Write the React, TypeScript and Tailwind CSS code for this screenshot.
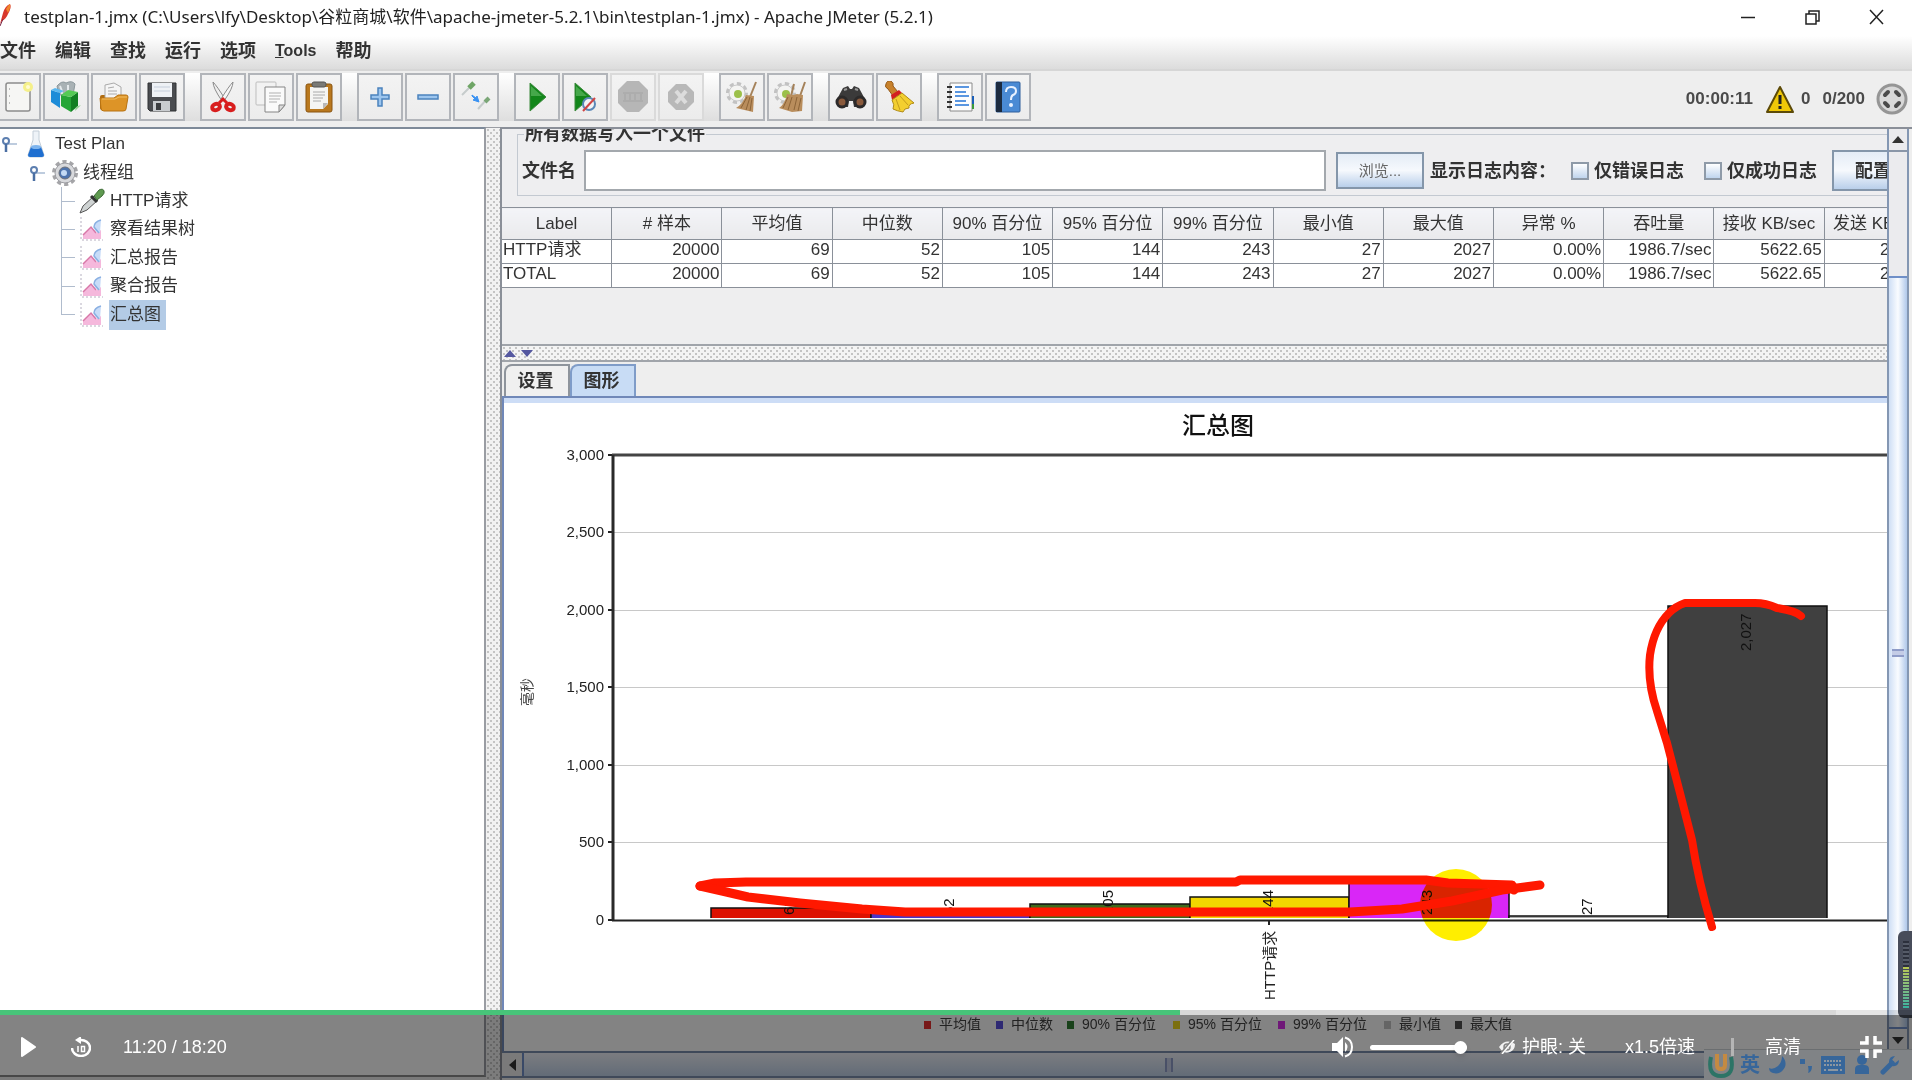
import React, { useState } from 'react';

interface ResultRow {
  label: string;
  values: string[];
}

interface ChartBar {
  label: string;
  x: number;
  top: number;
  width: number;
  color: string;
  textY: number;
}

const menus = ['文件', '编辑', '查找', '运行', '选项', 'Tools', '帮助'];

const columns = [
  'Label',
  '# 样本',
  '平均值',
  '中位数',
  '90% 百分位',
  '95% 百分位',
  '99% 百分位',
  '最小值',
  '最大值',
  '异常 %',
  '吞吐量',
  '接收 KB/sec',
  '发送 KB/sec',
];

const values = ['20000', '69', '52', '105', '144', '243', '27', '2027', '0.00%', '1986.7/sec', '5622.65', '240.57'];

const rows: ResultRow[] = [
  { label: 'HTTP请求', values },
  { label: 'TOTAL', values },
];

const ticks = [
  { label: '3,000', y: 455 },
  { label: '2,500', y: 532 },
  { label: '2,000', y: 610 },
  { label: '1,500', y: 687 },
  { label: '1,000', y: 765 },
  { label: '500', y: 842 },
  { label: '0', y: 920 },
];

const bars: ChartBar[] = [
  { label: '69', x: 711, top: 908, width: 160, color: '#dd1100', textY: 915 },
  { label: '52', x: 871, top: 911, width: 159, color: '#4a35c8', textY: 915 },
  { label: '105', x: 1030, top: 904, width: 160, color: '#3f6b1c', textY: 915 },
  { label: '144', x: 1190, top: 897, width: 159, color: '#f2d600', textY: 915 },
  { label: '243', x: 1349, top: 883, width: 160, color: '#d926f7', textY: 915 },
  { label: '27', x: 1509, top: 916, width: 159, color: '#a8a8a8', textY: 915 },
  { label: '2,027', x: 1668, top: 606, width: 159, color: '#404040', textY: 651 },
];

const legend = [
  { label: '平均值', x: 924, color: '#e83030' },
  { label: '中位数', x: 996, color: '#5a50e0' },
  { label: '90% 百分位', x: 1067, color: '#2f7f34' },
  { label: '95% 百分位', x: 1173, color: '#f0d820' },
  { label: '99% 百分位', x: 1278, color: '#d830ea' },
  { label: '最小值', x: 1384, color: '#c4c4c4' },
  { label: '最大值', x: 1455, color: '#505050' },
];

function Icon({ children }: { children: React.ReactNode }) {
  return (
    <svg viewBox="0 0 32 32" className="size-8" aria-hidden="true">
      {children}
    </svg>
  );
}

function Gear() {
  return (
    <g>
      <circle cx="11" cy="12" r="9" fill="none" stroke="#c2c2c2" strokeWidth="4" strokeDasharray="4 3" />
      <circle cx="11" cy="12" r="8" fill="#f4f4f2" stroke="#c9c9c9" />
      <circle cx="12" cy="13" r="4" fill="#9cc04a" />
    </g>
  );
}

const toolGroups = [
  [
    {
      name: '新建',
      icon: (
        <Icon>
          <rect x="4" y="2" width="24" height="28" rx="2" fill="#f6f6f4" stroke="#8c8c8c" strokeWidth="1.5" />
          <path d="M7 8h1M7 15h1M7 22h1" stroke="#bbb" strokeWidth="2" />
          <circle cx="26" cy="6" r="5" fill="#f5f08a" />
          <circle cx="26" cy="6" r="2" fill="#fffbd0" />
        </Icon>
      ),
    },
    {
      name: '模板',
      icon: (
        <Icon>
          <path d="M7 5q5-6 9-3 6-3 9 1l-2 11H9z" fill="#a9b2b5" stroke="#8c989c" />
          <path d="M10 5q2 4 2 8M18 4v8" stroke="#e5eaec" strokeWidth="2" />
          <path d="M1 9l9 3v15l-9-6z" fill="#1d8cd8" />
          <path d="M1 9l4-2 9 3-4 2z" fill="#5db8ef" />
          <path d="M11 14l10 2v15l-10-6z" fill="#25a536" />
          <path d="M21 16l7-5v14l-7 6z" fill="#127f22" />
          <path d="M11 14l7-5 10 2-7 5z" fill="#55ca55" />
          <path d="M26 26l5-2-6 6" fill="#92cf91" />
        </Icon>
      ),
    },
    {
      name: '打开',
      icon: (
        <Icon>
          <path d="M2 16q0-2 2-2h8v15H4q-2 0-2-2z" fill="#b06c10" />
          <path d="M7 4l9-2 7 4v12H7z" fill="#f5f5f5" stroke="#aaa" />
          <path d="M10 7l6-1M10 10h9M10 13h9" stroke="#aaa" />
          <path d="M2 17h14l4-3h8q2 0 2 2l-2 12q0 2-3 2H6q-3 0-3-3z" fill="#dd9427" stroke="#b87312" />
          <path d="M4 18h13l4-2h8" fill="none" stroke="#f2bd63" />
        </Icon>
      ),
    },
    {
      name: '保存',
      icon: (
        <Icon>
          <path d="M2 2h28v28H4l-2-2z" fill="#4a4c50" stroke="#2e3033" />
          <rect x="6" y="2" width="20" height="14" fill="#eef1f5" />
          <path d="M8 6h16M8 10h16" stroke="#c5cedb" />
          <rect x="7" y="20" width="17" height="10" fill="#c9cccf" />
          <rect x="10" y="22" width="5" height="7" fill="#3b3d40" />
        </Icon>
      ),
    },
  ],
  [
    {
      name: '剪切',
      icon: (
        <Icon>
          <path d="M6 1q0 6 9 19l3-2Q10 5 6 1z" fill="#eee" stroke="#8a8a8a" />
          <path d="M26 1q0 6-9 19l-3-2Q22 5 26 1z" fill="#f7f7f7" stroke="#8a8a8a" />
          <ellipse cx="9" cy="26" rx="4" ry="3" fill="none" stroke="#d81e1e" strokeWidth="4" transform="rotate(-25 9 26)" />
          <ellipse cx="23" cy="26" rx="4" ry="3" fill="none" stroke="#d81e1e" strokeWidth="4" transform="rotate(25 23 26)" />
          <path d="M12 22l4-4 4 4" fill="none" stroke="#d81e1e" strokeWidth="3" />
        </Icon>
      ),
    },
    {
      name: '复制',
      icon: (
        <Icon>
          <rect x="1" y="1" width="20" height="23" rx="1" fill="#f2f2f2" stroke="#bdbdbd" />
          <path d="M10 6h20v18l-6 7H10z" fill="#fafafa" stroke="#858585" />
          <path d="M14 12h12M14 15h12M14 18h11M14 21h8" stroke="#b0b0b0" />
          <path d="M30 24h-6v7z" fill="#ddd" stroke="#858585" />
        </Icon>
      ),
    },
    {
      name: '粘贴',
      icon: (
        <Icon>
          <rect x="3" y="3" width="26" height="28" rx="2" fill="#b9781e" stroke="#8a5510" />
          <path d="M7 6h18v17l-5 5H7z" fill="#f5f5f3" />
          <path d="M25 22h-5v6z" fill="#b8b8b8" />
          <rect x="9" y="1" width="14" height="5" rx="2" fill="#7a7a76" stroke="#555" />
          <path d="M10 11h12M10 14h12M10 17h10M10 20h8" stroke="#aaa" />
        </Icon>
      ),
    },
  ],
  [
    {
      name: '展开',
      icon: (
        <Icon>
          <path d="M14 7h4v7h7v4h-7v7h-4v-7H7v-4h7z" fill="#9cc5ee" stroke="#4b83bd" strokeWidth="1.5" />
        </Icon>
      ),
    },
    {
      name: '折叠',
      icon: (
        <Icon>
          <rect x="6" y="14" width="20" height="4" fill="#9cc5ee" stroke="#4b83bd" strokeWidth="1.5" />
        </Icon>
      ),
    },
    {
      name: '切换',
      icon: (
        <Icon>
          <path d="M2 14L11 5" stroke="#c6cccc" strokeWidth="2" />
          <path d="M9 7l5-5" stroke="#6fa566" strokeWidth="5" />
          <path d="M18 28l9-10" stroke="#c6cccc" strokeWidth="2" />
          <path d="M25 21l4-4" stroke="#7aa676" strokeWidth="4" />
          <path d="M12 14l4 3 1-2 2 6-6-2 2-1-3-3z" fill="#3a92f2" stroke="#3a92f2" />
        </Icon>
      ),
    },
  ],
  [
    {
      name: '启动',
      icon: (
        <Icon>
          <path d="M9 2l16 14L9 30z" fill="#12861a" stroke="#3c8a3c" />
          <path d="M10 5l11 10H10z" fill="#45a84a" />
        </Icon>
      ),
    },
    {
      name: '不停顿开始',
      icon: (
        <Icon>
          <path d="M6 2l16 14L6 30z" fill="#12861a" stroke="#3c8a3c" />
          <path d="M7 5l11 10H7z" fill="#45a84a" />
          <circle cx="20" cy="23" r="6" fill="#f2f4f6" stroke="#5a88b8" strokeWidth="2" />
          <path d="M14 30l12-13" stroke="#d04545" strokeWidth="2" />
        </Icon>
      ),
    },
    {
      name: '停止',
      disabled: true,
      icon: (
        <Icon>
          <path d="M10 0h12l9 9v13l-9 9H10l-9-9V9z" fill="#b6b6b6" />
          <path d="M6 12h20M6 20h20" stroke="#adadad" strokeWidth="2" />
          <path d="M8 12v8M13 12v8M18 12v8M24 12v8" stroke="#adadad" strokeWidth="2" />
        </Icon>
      ),
    },
    {
      name: '关闭',
      disabled: true,
      icon: (
        <Icon>
          <path d="M11 3h10l8 8v10l-8 8H11l-8-8V11z" fill="#b8b8b8" />
          <path d="M11 10l10 12M21 10L11 22" stroke="#dcdcdc" strokeWidth="4" />
        </Icon>
      ),
    },
  ],
  [
    {
      name: '清除',
      icon: (
        <Icon>
          <Gear />
          <path d="M30 1l-6 15" stroke="#a5825a" strokeWidth="2" />
          <path d="M20 14l8 1-1 16-17-4q7-4 10-13z" fill="#b98d5c" />
          <path d="M21 16l-6 11M24 16l-4 13M26 17l-2 13" stroke="#8c6438" />
        </Icon>
      ),
    },
    {
      name: '清除全部',
      icon: (
        <Icon>
          <Gear />
          <path d="M20 3l-3 12M31 1l-5 14" stroke="#a5825a" strokeWidth="2" />
          <path d="M13 13l6 1 4-1 6 1-1 16-10 1-13-4q6-4 8-14z" fill="#b98d5c" />
          <path d="M14 16L9 27M18 16l-4 13M23 16l-3 13M27 17l-3 13" stroke="#8c6438" />
        </Icon>
      ),
    },
  ],
  [
    {
      name: '查找',
      icon: (
        <Icon>
          <path d="M8 7l5-2 2 3h2l2-3 5 2 7 13-4 6h-8l-1-6h-4l-1 6H5l-4-6z" fill="#3b3a3a" />
          <circle cx="7" cy="21" r="5" fill="#8a5a3c" stroke="#2c2a2a" strokeWidth="3" />
          <circle cx="25" cy="21" r="5" fill="#8a5a3c" stroke="#2c2a2a" strokeWidth="3" />
          <path d="M9 9l3-1M20 8l3 1" stroke="#999" strokeWidth="2" />
        </Icon>
      ),
    },
    {
      name: '清除查找',
      icon: (
        <Icon>
          <path d="M3 3q1-4 5-3 3 2 2 5l5 6-5 4-5-7Q1 6 3 3z" fill="#c8822c" stroke="#94591a" />
          <path d="M8 14l8-5 3 3-10 7z" fill="#d32020" />
          <path d="M9 19l10-7 12 10q-6 1-5 5-5 0-6 4-6-1-10-3 2-4-1-9z" fill="#f3cf2f" stroke="#b08a14" />
          <path d="M13 18l4 11M17 15l8 9" stroke="#c49d1c" />
        </Icon>
      ),
    },
  ],
  [
    {
      name: '函数助手',
      icon: (
        <Icon>
          <path d="M6 2h22v28H6z" fill="#fdfdfd" stroke="#8a8a8a" />
          <path d="M28 15h2v8h-2z" fill="#1b5fb8" />
          <path d="M28 23h2v5h-2z" fill="#3a9a3a" />
          <path d="M11 6h14M11 11h11M11 15h14M11 20h11M11 24h14" stroke="#5a96e0" strokeWidth="2" />
          <path d="M3 6h5M3 11h5M3 16h5M3 21h5M3 26h5" stroke="#333" strokeWidth="2" />
        </Icon>
      ),
    },
    {
      name: '帮助',
      icon: (
        <Icon>
          <rect x="4" y="1" width="24" height="30" rx="1" fill="#4a8ad4" stroke="#2f5f9c" />
          <rect x="4" y="1" width="6" height="30" fill="#1c2b40" />
          <path d="M14 11q0-5 5-5t5 4q0 3-3 4-2 1-2 5" fill="none" stroke="#e8f1ff" strokeWidth="2" />
          <circle cx="19" cy="24" r="2" fill="#e8f1ff" />
        </Icon>
      ),
    },
  ],
];

function Knob() {
  return (
    <svg viewBox="0 0 18 20" className="h-5 w-[18px] shrink-0" aria-hidden="true">
      <path d="M8 10h9" stroke="#a9bbd3" strokeWidth="1.5" />
      <circle cx="6" cy="7" r="3" fill="#fff" stroke="#5d7fb0" strokeWidth="2" />
      <path d="M6 10v8" stroke="#4b6fa3" strokeWidth="2.5" />
    </svg>
  );
}

function GraphIcon() {
  return (
    <svg viewBox="0 0 26 26" className="size-[26px]" aria-hidden="true">
      <path d="M2 1v23h22" fill="none" stroke="#b5b0c0" strokeDasharray="2 2" />
      <path d="M4 23v-4l8-8 5 6 5-3v9z" fill="#f5b8dc" />
      <path d="M4 19l8-8 5 6" fill="none" stroke="#d878a8" strokeWidth="1.5" />
      <path d="M22 4q-7 2-7 7t6 6z" fill="#c8dcf8" />
      <path d="M22 4q-7 2-7 7l5 6" fill="none" stroke="#8ab0e2" strokeWidth="1.5" />
    </svg>
  );
}

const samplers = ['HTTP请求', '察看结果树', '汇总报告', '聚合报告', '汇总图'];

function PlanTree() {
  const [selected, setSelected] = useState('汇总图');

  return (
    <ul className="flex h-[200px] flex-col pt-[1px] text-[17px] leading-6 text-[#333]">
      <li className="flex flex-1 items-center">
        <Knob />
        <svg viewBox="0 0 18 28" className="ml-[9px] h-7 w-[18px]" aria-hidden="true">
          <path d="M6 1h6v9l5 15q0 2-2 2H3q-2 0-2-2l5-15z" fill="#eef3f8" stroke="#c3ced8" />
          <path d="M4 17h10l3 8q0 2-2 2H3q-2 0-2-2z" fill="#1f6fd0" />
          <ellipse cx="9" cy="17" rx="5" ry="2" fill="#7db4ee" />
        </svg>
        <span className="ml-[10px]">Test Plan</span>
      </li>
      <li className="flex flex-1 items-center pl-7">
        <Knob />
        <svg viewBox="0 0 28 28" className="ml-[5px] size-7" aria-hidden="true">
          <circle cx="14" cy="14" r="11" fill="none" stroke="#a5a5a8" strokeWidth="4" strokeDasharray="4 3" />
          <circle cx="14" cy="14" r="10" fill="#d8d9dc" stroke="#9c9da2" />
          <circle cx="14" cy="14" r="6" fill="#4f74ad" stroke="#6b6f78" />
          <circle cx="13" cy="14" r="3" fill="#c4daf5" />
        </svg>
        <span className="ml-[4px]">线程组</span>
      </li>
      {samplers.map((name, i) => (
        <li key={name} className="flex flex-1 items-stretch pl-[61px]">
          <span className="flex w-[14px] flex-col">
            <span className="flex-1 border-b border-l border-[#b0bccd]" />
            <span className={i === samplers.length - 1 ? 'flex-1' : 'flex-1 border-l border-[#b0bccd]'} />
          </span>
          <span className="ml-[4px] flex items-center">
            {i === 0 ? (
              <svg viewBox="0 0 26 26" className="size-[26px]" aria-hidden="true">
                <path d="M1 25l3-7L15 8l4 4L8 22z" fill="#cfd3d3" stroke="#555" />
                <path d="M12 8l6 6" stroke="#333" strokeWidth="3" />
                <path d="M15 8l5-6q4-2 5 1 1 2-2 5l-5 4z" fill="#5f9a50" stroke="#3c6b35" />
              </svg>
            ) : (
              <GraphIcon />
            )}
          </span>
          <button
            onClick={() => setSelected(name)}
            className={
              selected === name ? 'ml-[5px] bg-[#b3cbe6] pr-1 outline-1 outline-[#b3cbe6]' : 'ml-[5px] pr-1'
            }
          >
            {name}
          </button>
        </li>
      ))}
    </ul>
  );
}

function SummaryChart() {
  return (
    <svg
      viewBox="504 403 1383 649"
      className="h-[649px] w-[1383px] shrink-0 font-['Liberation_Sans','Noto_Sans_CJK_SC',sans-serif]"
      role="img"
      aria-label="汇总图"
    >
      <text x="1218" y="434" fontSize="24" fontWeight="500" textAnchor="middle" fill="#111">
        汇总图
      </text>
      {ticks.map((tick) => (
        <g key={tick.label}>
          <path d={`M612 ${tick.y}.5H1887`} stroke="#c8c8c8" />
          <path d={`M608 ${tick.y}H612`} stroke="#222" strokeWidth="2" />
          <text x="604" y={tick.y + 5} fontSize="15" textAnchor="end" fill="#222">
            {tick.label}
          </text>
        </g>
      ))}
      <path d="M612 455H1887" stroke="#444" strokeWidth="3" />
      <path d="M613 455V920" stroke="#2a2a2a" strokeWidth="3" />
      <path d="M612 920.5H1887" stroke="#222" strokeWidth="2" />
      <path d="M1269 921v4" stroke="#222" strokeWidth="2" />
      {bars.map((bar) => (
        <g key={bar.label}>
          <rect x={bar.x} y={bar.top} width={bar.width} height={918 - bar.top} fill={bar.color} />
          <path d={`M${bar.x} 918V${bar.top}h${bar.width}V918`} fill="none" stroke="#111" strokeWidth="1.5" />
        </g>
      ))}
      {bars.map((bar) => (
        <text
          key={bar.label}
          transform={`translate(${bar.x + bar.width / 2 + 3} ${bar.textY}) rotate(-90)`}
          fontSize="15"
          fill="#111"
        >
          {bar.label}
        </text>
      ))}
      <text transform="translate(1275 1000) rotate(-90)" fontSize="15" fill="#222">
        HTTP请求
      </text>
      <text transform="translate(532 706) rotate(-90)" fontSize="14" fill="#444">
        毫秒
      </text>

      {/* pen marks and pointer highlight */}
      <g fill="none" stroke="#ff1800" strokeWidth="9" strokeLinecap="round" strokeLinejoin="round">
        <path d="M700 886L715 883L746 882L1236 882L1240 880L1426 880L1448 883L1512 885L1514 890" />
        <path d="M700 886L722 891L748 897L800 903L862 909L905 912L1350 912L1402 909L1452 901L1502 890L1540 885" />
        <path
          strokeWidth="8"
          d="M1801 616Q1796 611 1777 608Q1766 603 1755 603H1685Q1676 606 1669 613Q1654 628 1650 655Q1647 682 1657 711L1667 743L1680 793L1692 840Q1698 880 1712 927"
        />
      </g>
      <circle cx="1456" cy="905" r="36" fill="#ffee00" className="mix-blend-multiply" />

      {legend.map((item) => (
        <g key={item.label}>
          <rect x={item.x} y="1021" width="7" height="8" fill={item.color} />
          <text x={item.x + 15} y="1029" fontSize="14" fill="#444">
            {item.label}
          </text>
        </g>
      ))}
    </svg>
  );
}

function LogOptions() {
  return (
    <div className="h-[78px] shrink-0 overflow-hidden bg-[#eeeef0]">
      <fieldset className="-mt-[7px] ml-[15px] w-[calc(100%+16px)] border border-[#c3c9d1] pr-[3px] pb-1 pl-[4px] text-[18px] font-bold text-[#333]">
        <legend className="ml-[2px] px-[1px] leading-6">所有数据写入一个文件</legend>
        <div className="flex items-center pt-1 leading-6 whitespace-nowrap">
          <label htmlFor="filename">文件名</label>
          <input
            id="filename"
            type="text"
            className="ml-2 h-[41px] min-w-0 flex-1 border-2 border-[#a3a8ad] bg-white px-1 font-normal"
          />
          <button className="ml-[10px] h-[37px] w-[88px] border-2 border-[#8496aa] bg-linear-to-b from-[#e4ecf6] via-[#f6f9fd] to-[#b9cfea] text-[15px] font-normal text-[#666]">
            浏览...
          </button>
          <span className="ml-[6px]">显示日志内容：</span>
          <input
            id="errors"
            type="checkbox"
            className="ml-[15px] size-[18px] appearance-none border-2 border-[#8e9aa8] bg-linear-to-b from-white to-[#c0d5ee]"
          />
          <label htmlFor="errors" className="ml-[5px]">
            仅错误日志
          </label>
          <input
            id="successes"
            type="checkbox"
            className="ml-5 size-[18px] appearance-none border-2 border-[#8e9aa8] bg-linear-to-b from-white to-[#c0d5ee]"
          />
          <label htmlFor="successes" className="ml-[5px]">
            仅成功日志
          </label>
          <button className="ml-[15px] h-[41px] w-[82px] border-2 border-[#8496aa] bg-linear-to-b from-[#e4ecf6] via-[#f6f9fd] to-[#b9cfea]">
            配置
          </button>
        </div>
      </fieldset>
    </div>
  );
}

function ResultTable() {
  return (
    <div className="h-[137px] shrink-0 overflow-hidden bg-[#eeeeef]">
      <table className="-ml-px w-[1434px] table-fixed border-collapse text-[17px] text-[#333]">
        <thead>
          <tr className="h-8">
            {columns.map((name) => (
              <th
                key={name}
                className="border border-[#8a9099] bg-linear-to-b from-[#f3f4f8] to-[#eaeaec] p-0 leading-6 font-normal whitespace-nowrap"
              >
                {name}
              </th>
            ))}
          </tr>
        </thead>
        <tbody className="bg-white">
          {rows.map((row) => (
            <tr key={row.label} className="h-6">
              <td className="border border-[#8a9099] p-0 pl-[1px] align-top leading-5">{row.label}</td>
              {row.values.map((value, i) => (
                <td key={i} className="border border-[#8a9099] p-0 pr-[2px] text-right align-top leading-5">
                  {value}
                </td>
              ))}
            </tr>
          ))}
        </tbody>
      </table>
    </div>
  );
}

function PlayerControls() {
  const [volume, setVolume] = useState(100);

  return (
    <div className="absolute inset-x-0 bottom-0 text-[18px] text-white">
      <div className="relative h-[5px] bg-black/10">
        <div className="absolute inset-y-0 left-0 w-[96%] bg-[#d8d8d8]" />
        <div className="absolute inset-y-0 left-0 bg-[#47c479]" style={{ width: `${(680 / 1100) * 100 - 0.1}%` }} />
      </div>
      <div className="relative flex h-[65px] items-center bg-black/[0.486] pr-[30px] pb-[1px] pl-[21px] leading-6 whitespace-nowrap">
        {/* input method bar */}
        <div className="absolute right-0 bottom-0 flex h-[31px] w-[208px] items-center border-t border-[#6b6e70] bg-[#808386] pl-[4px] text-[#37669a]">
          <svg viewBox="0 0 26 28" className="h-7 w-[26px]" aria-hidden="true">
            <path d="M3 6q-4 19 10 19T23 6" fill="none" stroke="#2c7466" strokeWidth="4" />
            <path d="M9 3v11q0 4 4 4t4-4V3" fill="none" stroke="#c48a42" strokeWidth="4" />
          </svg>
          <span className="ml-[6px] text-[20px] font-bold">英</span>
          <svg viewBox="0 0 20 20" className="ml-[8px] size-5" aria-hidden="true">
            <path d="M14 1q5 5 3 11-4 8-12 6-4-1-4-5 4 2 9-2 4-4 4-10z" fill="currentColor" />
          </svg>
          <svg viewBox="0 0 14 18" className="ml-[11px] h-[18px] w-[14px]" aria-hidden="true">
            <rect x="1" y="3" width="5" height="5" fill="currentColor" />
            <path d="M9 10h4q0 6-4 7 1-2 0-7z" fill="currentColor" />
          </svg>
          <svg viewBox="0 0 24 18" className="ml-[8px] h-[18px] w-6" aria-hidden="true">
            <rect width="24" height="18" fill="currentColor" />
            <path d="M3 5h18M3 9h18" stroke="#8c96a0" strokeWidth="2" strokeDasharray="2 1" />
            <path d="M3 14h2M7 14h10M19 14h2" stroke="#8c96a0" strokeWidth="2" />
          </svg>
          <svg viewBox="0 0 16 20" className="ml-[9px] h-5 w-4" aria-hidden="true">
            <circle cx="8" cy="5" r="5" fill="currentColor" />
            <path d="M1 19v-5q0-4 5-4h4q5 0 5 4v5z" fill="currentColor" />
          </svg>
          <svg viewBox="0 0 20 20" className="ml-[10px] size-5" aria-hidden="true">
            <path d="M3 17L12 8" stroke="currentColor" strokeWidth="5" strokeLinecap="round" />
            <path d="M15 1q-6 0-6 6 1 5 6 4 4-1 4-6l-4 3-3-3z" fill="currentColor" />
          </svg>
        </div>

        <button aria-label="播放" className="relative">
          <svg viewBox="0 0 15 20" className="h-5 w-[15px]">
            <path d="M1 1l13 9L1 19z" fill="#fff" stroke="#fff" strokeWidth="2" strokeLinejoin="round" />
          </svg>
        </button>
        <button aria-label="后退10秒" className="relative ml-[35px]">
          <svg viewBox="0 0 20 20" className="size-5">
            <path d="M1 11a9 8 0 1 0 8-8" fill="none" stroke="#fff" strokeWidth="2.5" />
            <path d="M10 -1v8L4 3z" fill="#fff" />
            <path d="M7 9v6M10.500 9.500h3v5h-3z" fill="none" stroke="#fff" strokeWidth="1.5" />
          </svg>
        </button>
        <span className="ml-8">11:20 / 18:20</span>

        <button aria-label="音量" className="relative ml-auto">
          <svg viewBox="0 0 23 22" className="h-[22px] w-[23px]">
            <path d="M1 7h5l6-6v20l-6-6H1z" fill="#fff" />
            <path d="M14 6q5 5 0 10z" fill="#fff" />
            <path d="M14 1.500q7 2 7 9.500t-7 9.500" fill="none" stroke="#fff" strokeWidth="2" />
          </svg>
        </button>
        <input
          type="range"
          aria-label="音量大小"
          value={volume}
          onChange={(e) => setVolume(Number(e.target.value))}
          className="ml-4 h-[5px] w-[97px] appearance-none rounded-full bg-white [&::-webkit-slider-thumb]:size-[13px] [&::-webkit-slider-thumb]:appearance-none [&::-webkit-slider-thumb]:rounded-full [&::-webkit-slider-thumb]:bg-white [&::-webkit-slider-thumb]:shadow-md"
        />
        <button className="ml-[31px] flex items-center gap-[6px]">
          <svg viewBox="0 0 18 14" className="h-[14px] w-[18px]" aria-hidden="true">
            <path d="M1 7q7-9 16-3 0 6-5 8-6 3-11-5z" fill="#f2f2f2" />
            <circle cx="9" cy="7" r="3" fill="none" stroke="#838383" strokeWidth="1.5" />
            <path d="M3 14L15 0" stroke="#838383" strokeWidth="3" />
            <path d="M4 14L16 0" stroke="#fff" strokeWidth="1.5" />
          </svg>
          护眼: 关
        </button>
        <button className="ml-[39px]">x1.5倍速</button>
        <span className="relative ml-[36px] h-[18px] w-[3px] bg-[#b5b5b5]" />
        <button className="relative ml-[31px]">高清</button>
        <button aria-label="退出全屏" className="relative ml-[59px]">
          <svg viewBox="0 0 22 22" className="size-[22px]">
            <path d="M0 7h7V0M15 0v7h7M0 15h7v7M22 15h-7v7" fill="none" stroke="#fff" strokeWidth="3.5" />
          </svg>
        </button>
      </div>
    </div>
  );
}

export default function App() {
  const [tab, setTab] = useState('图形');

  return (
    <div className="relative flex h-screen flex-col overflow-hidden bg-[#eeeeee] font-['Liberation_Sans','Noto_Sans_CJK_SC',sans-serif]">
      <header className="flex h-9 shrink-0 items-center bg-white pr-[28px] pb-[3px]">
        <svg viewBox="0 0 14 26" className="h-[26px] w-[14px] self-start" aria-hidden="true">
          <path d="M0 24L3 13Q5 6 10 4q2 3-2 10-2 5-6 7z" fill="#d8382c" />
          <path d="M6 9q2-4 4-5 1 3-2 9z" fill="#f0862c" />
          <path d="M0 26l3-7" stroke="#7a2a4a" />
        </svg>
        <h1 className="ml-[10px] font-['Noto_Sans','Noto_Sans_CJK_SC',sans-serif] text-[17px] leading-6 text-[#222]">
          {'testplan-1.jmx (C:\\Users\\lfy\\Desktop\\谷粒商城\\软件\\apache-jmeter-5.2.1\\bin\\testplan-1.jmx) - Apache JMeter (5.2.1)'}
        </h1>
        <div className="ml-auto flex items-center gap-[49px]">
          <button aria-label="最小化">
            <svg viewBox="0 0 15 16" className="h-4 w-[15px]">
              <path d="M0 8.500h14" stroke="#222" strokeWidth="1.5" />
            </svg>
          </button>
          <button aria-label="还原">
            <svg viewBox="0 0 15 16" className="h-4 w-[15px]">
              <path d="M1 5h10v10H1zM4 5V2h10v10h-3" fill="none" stroke="#222" strokeWidth="1.5" />
            </svg>
          </button>
          <button aria-label="关闭窗口">
            <svg viewBox="0 0 15 16" className="h-4 w-[15px]">
              <path d="M1 1l13 14M14 1L1 15" stroke="#222" strokeWidth="1.5" />
            </svg>
          </button>
        </div>
      </header>

      <nav className="flex h-[35px] shrink-0 items-center gap-[19px] border-b-2 border-[#d6d6d6] bg-linear-to-b from-white to-[#dcdcdc] pb-[3px] text-[18px] font-bold text-[#333]">
        {menus.map((menu) => (
          <button key={menu} className={menu === 'Tools' ? 'text-base leading-6' : 'leading-6'}>
            {menu === 'Tools' ? (
              <>
                <span className="underline">T</span>ools
              </>
            ) : (
              menu
            )}
          </button>
        ))}
      </nav>

      <div className="flex h-14 shrink-0 items-start justify-between bg-[#eeeeee] pt-[2px] pr-1">
        <div className="-ml-[5px] flex">
          {toolGroups.map((group, g) => (
            <React.Fragment key={g}>
              {g > 0 && <span className="h-12 w-[15px] bg-linear-to-b from-white to-[#dedede]" />}
              <div className="flex gap-[2px]">
                {group.map((tool) => (
                  <button
                    key={tool.name}
                    aria-label={tool.name}
                    disabled={'disabled' in tool}
                    className="flex h-12 w-[46px] items-center justify-center border-2 border-[#b2b5ba] bg-linear-to-b from-[#f3f3f3] to-[#ececec] disabled:border-[#dadada]"
                  >
                    {tool.icon}
                  </button>
                ))}
              </div>
            </React.Fragment>
          ))}
        </div>
        <div className="flex h-[52px] items-center text-[17px] leading-6 font-bold text-[#4a4a4a]">
          <span>00:00:11</span>
          <svg viewBox="0 0 28 28" className="ml-[13px] size-7" aria-hidden="true">
            <path d="M14 2l13 25H1z" fill="#f0c808" stroke="#5c4a08" strokeWidth="2" strokeLinejoin="round" />
            <path d="M14 10v9M14 21v3" stroke="#222" strokeWidth="3" />
          </svg>
          <span className="ml-[7px]">0</span>
          <span className="ml-3">0/200</span>
          <svg viewBox="0 0 32 32" className="ml-[11px] size-8" aria-hidden="true">
            <circle cx="16" cy="16" r="14" fill="#d8d8d8" stroke="#959595" strokeWidth="3" />
            <path
              d="M9 12l3-3M20 9l3 3M9 20l3 3M20 23l3-3"
              fill="none"
              stroke="#4a4a4a"
              strokeWidth="4"
              strokeLinecap="round"
            />
          </svg>
        </div>
      </div>

      <main className="flex min-h-0 flex-1">
        <aside className="mb-[3px] w-[486px] shrink-0 border-t-2 border-r-2 border-b-2 border-t-[#7e8a99] border-r-[#9a9da3] border-b-[#8a8a8a] bg-white">
          <PlanTree />
        </aside>
        <div className="w-[14px] shrink-0 border-t border-[#9a9da3] bg-[#f2f2f2] bg-[radial-gradient(circle_at_2px_2px,#c4c4c4_1px,transparent_1px),radial-gradient(circle_at_5px_5px,#c4c4c4_1px,transparent_1px)] [background-size:6px_6px]" />

        <section className="flex min-w-0 flex-1 flex-col border-t-2 border-l-2 border-[#8a8f98]">
          <div className="flex min-h-0 flex-1">
            <div className="flex min-w-0 flex-1 flex-col">
              <LogOptions />
              <ResultTable />
              <div className="flex h-[18px] shrink-0 items-center gap-[5px] border-y-2 border-[#a0a4aa] bg-[#f4f4f4] bg-[radial-gradient(circle_at_2px_2px,#c4c4c4_1px,transparent_1px),radial-gradient(circle_at_5px_5px,#c4c4c4_1px,transparent_1px)] [background-size:6px_6px] pl-[2px]">
                <button aria-label="向上折叠">
                  <svg viewBox="0 0 12 7" className="block h-[7px] w-3">
                    <path d="M6 0l6 7H0z" fill="#5558a0" />
                  </svg>
                </button>
                <button aria-label="向下折叠">
                  <svg viewBox="0 0 12 7" className="block h-[7px] w-3">
                    <path d="M0 0h12L6 7z" fill="#5558a0" />
                  </svg>
                </button>
              </div>
              <div className="flex h-[34px] shrink-0 items-end bg-[#eeeeee] pl-[2px] text-[18px] font-bold text-[#333]">
                {['设置', '图形'].map((name) => (
                  <button
                    key={name}
                    onClick={() => setTab(name)}
                    className={
                      tab === name
                        ? 'h-8 w-[66px] rounded-tl-lg border-2 border-b-0 border-[#7f9cc8] bg-[#c8dcf5] pr-[3px] leading-6'
                        : 'h-8 w-[66px] rounded-tl-lg border-2 border-b-0 border-[#8e949c] bg-[#f0f0f0] pr-[3px] leading-6'
                    }
                  >
                    {name}
                  </button>
                ))}
              </div>
              <div className="flex min-h-0 flex-1 flex-col overflow-hidden border-t-2 border-l-2 border-[#7088b8] bg-white">
                <div className="h-[5px] shrink-0 bg-[#cdddf6]" />
                <SummaryChart />
              </div>
            </div>
            <div className="flex w-[22px] shrink-0 flex-col border-x-2 border-[#8497b3] bg-[#ebebee]">
              <button aria-label="向上滚动" className="flex h-[23px] items-center justify-center border-b-2 border-[#8a96a8]">
                <svg viewBox="0 0 12 7" className="h-[7px] w-3">
                  <path d="M6 0l6 7H0z" fill="#333" />
                </svg>
              </button>
              <div className="h-[124px]" />
              <div className="flex flex-1 items-center justify-center border-y-2 border-[#6f8fc8] bg-linear-to-r from-[#cfdff5] via-[#fafcff] to-[#b0c8ea]">
                <span className="h-[8px] w-3 border-y-2 border-[#8f9cc8] bg-[#c4cce6]" />
              </div>
              <button aria-label="向下滚动" className="flex h-[22px] items-center justify-center">
                <svg viewBox="0 0 12 7" className="h-[7px] w-3">
                  <path d="M0 0h12L6 7z" fill="#333" />
                </svg>
              </button>
            </div>
            <div className="w-[3px] shrink-0" />
          </div>
          <div className="mb-[2px] flex h-[27px] shrink-0 border-y-2 border-[#7c8fae] bg-[#eeeeee]">
            <button aria-label="向左滚动" className="flex w-5 items-center justify-center">
              <svg viewBox="0 0 7 12" className="h-3 w-[7px]">
                <path d="M7 0v12L0 6z" fill="#333" />
              </svg>
            </button>
            <div className="flex flex-1 items-center border-l-2 border-[#6f8fc8] bg-linear-to-b from-[#f0f2fa] to-[#c0d2e8] pl-[641px]">
              <span className="h-[14px] w-[8px] border-x-2 border-[#8f9cc8] bg-[#c4cce6]" />
            </div>
          </div>
        </section>
      </main>

      {/* recording level meter */}
      <div className="absolute right-0 bottom-[62px] h-[87px] w-[14px] rounded-l-md bg-[#474c5a] pt-[10px] pl-[5px]">
        <div className="h-[26px] w-[6px] bg-[repeating-linear-gradient(#2c303c_0_2px,#555b68_2px_4px)]" />
        <div className="h-[42px] w-[6px] bg-linear-to-b from-[#b8c850] to-[#30b0a0]">
          <div className="h-full bg-[repeating-linear-gradient(transparent_0_2px,#474c5a_2px_3px)]" />
        </div>
      </div>

      <PlayerControls />
    </div>
  );
}
